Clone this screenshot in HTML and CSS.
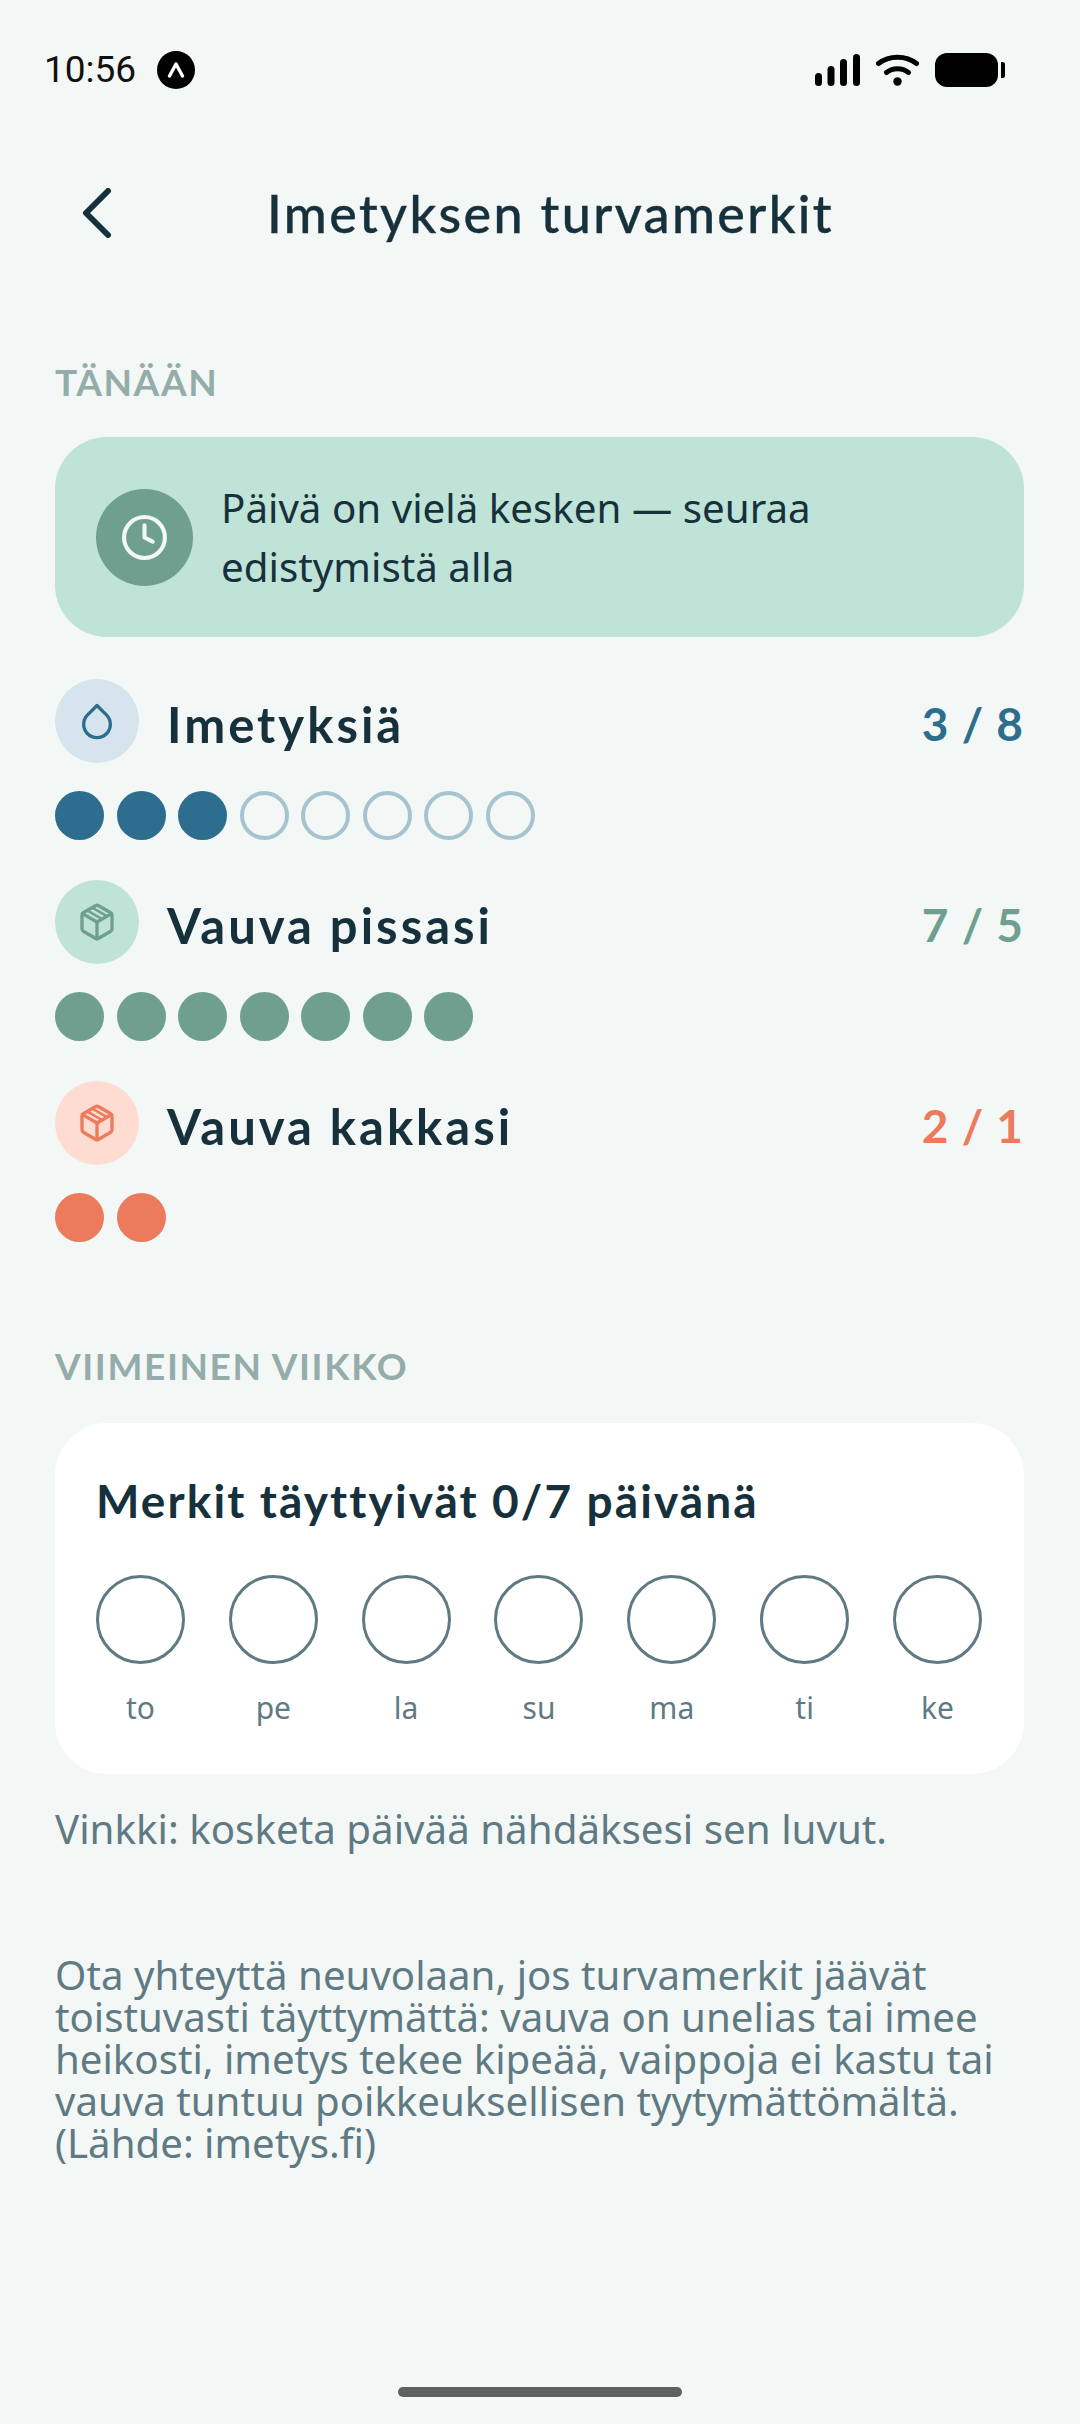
FILE: index.html
```html
<!DOCTYPE html>
<html lang="fi">
<head>
<meta charset="utf-8">
<title>Imetyksen turvamerkit</title>
<link rel="stylesheet" href="styles.css">
</head>
<body>
<div class="screen">
  <div class="status">
    <div class="status-left">
      <span class="time">10:56</span>
      <svg class="expo" viewBox="0 0 38 38"><circle cx="19" cy="19" r="19" fill="#000"/><path d="M12.5 25 19 13l6.500 12" fill="none" stroke="#fff" stroke-width="3.400" stroke-linecap="round" stroke-linejoin="round"/></svg>
    </div>
    <div class="status-right">
      <svg class="signal" viewBox="0 0 45 32"><rect x="0" y="19" width="7" height="13" rx="3.500"/><rect x="12.500" y="12" width="7" height="20" rx="3.500"/><rect x="25" y="5" width="7" height="27" rx="3.500"/><rect x="38" y="0" width="7" height="32" rx="3.500"/></svg>
      <svg class="wifi" viewBox="0 0 43 32"><path d="M2.500 9.500C13 1 30 1 40.500 9.500" fill="none" stroke="#000" stroke-width="5" stroke-linecap="round"/><path d="M10.500 18.500C17 13.500 26 13.500 32.500 18.500" fill="none" stroke="#000" stroke-width="5" stroke-linecap="round"/><circle cx="21.500" cy="27.500" r="4.200"/></svg>
      <svg class="battery" viewBox="0 0 70 34"><rect x="0" y="0" width="63" height="34" rx="12"/><path d="M66 9h1.500a2.500 2.500 0 0 1 2.500 2.500v11a2.500 2.500 0 0 1-2.500 2.500H66z"/></svg>
    </div>
  </div>

  <header class="topbar">
    <svg class="back" viewBox="0 0 30 50"><path d="M26 3 4 25l22 22" fill="none" stroke="#17313c" stroke-width="6" stroke-linecap="round" stroke-linejoin="round"/></svg>
    <h1 class="title">Imetyksen turvamerkit</h1>
  </header>

  <main class="content">
    <h2 class="section">TÄNÄÄN</h2>

    <div class="banner">
      <div class="banner-icon">
        <svg class="clock" viewBox="0 0 24 24" fill="none" stroke="currentColor" stroke-width="2" stroke-linecap="round" stroke-linejoin="round"><circle cx="12" cy="12" r="10"/><polyline points="12 6 12 12 16 14"/></svg>
      </div>
      <p class="banner-text">Päivä on vielä kesken — seuraa<br>edistymistä alla</p>
    </div>

    <section class="metric">
      <div class="metric-head">
        <span class="metric-icon bg-blue c-blue">
          <svg class="glyph" viewBox="0 0 24 24" fill="none" stroke="currentColor" stroke-width="2" stroke-linecap="round" stroke-linejoin="round"><path d="M12 2.690l5.660 5.660a8 8 0 1 1-11.310 0z"/></svg>
        </span>
        <span class="metric-name">Imetyksiä</span>
        <span class="metric-value c-blue">3 / 8</span>
      </div>
      <div class="dots">
        <i class="dot fill-blue"></i><i class="dot fill-blue"></i><i class="dot fill-blue"></i><i class="dot empty"></i><i class="dot empty"></i><i class="dot empty"></i><i class="dot empty"></i><i class="dot empty"></i>
      </div>
    </section>

    <section class="metric">
      <div class="metric-head">
        <span class="metric-icon bg-green c-green">
          <svg class="glyph" viewBox="0 0 24 24" fill="none" stroke="currentColor" stroke-width="2" stroke-linecap="round" stroke-linejoin="round"><path d="M21 16V8a2 2 0 0 0-1-1.730l-7-4a2 2 0 0 0-2 0l-7 4A2 2 0 0 0 3 8v8a2 2 0 0 0 1 1.730l7 4a2 2 0 0 0 2 0l7-4A2 2 0 0 0 21 16z"/><polyline points="3.270 6.960 12 12.010 20.730 6.960"/><line x1="12" y1="22.080" x2="12" y2="12"/><path class="band" d="M9.500 3.600l8.500 4.900M6.500 5.300l8.500 4.900"/></svg>
        </span>
        <span class="metric-name">Vauva pissasi</span>
        <span class="metric-value c-green">7 / 5</span>
      </div>
      <div class="dots">
        <i class="dot fill-green"></i><i class="dot fill-green"></i><i class="dot fill-green"></i><i class="dot fill-green"></i><i class="dot fill-green"></i><i class="dot fill-green"></i><i class="dot fill-green"></i>
      </div>
    </section>

    <section class="metric">
      <div class="metric-head">
        <span class="metric-icon bg-coral c-coral">
          <svg class="glyph" viewBox="0 0 24 24" fill="none" stroke="currentColor" stroke-width="2" stroke-linecap="round" stroke-linejoin="round"><path d="M21 16V8a2 2 0 0 0-1-1.730l-7-4a2 2 0 0 0-2 0l-7 4A2 2 0 0 0 3 8v8a2 2 0 0 0 1 1.730l7 4a2 2 0 0 0 2 0l7-4A2 2 0 0 0 21 16z"/><polyline points="3.270 6.960 12 12.010 20.730 6.960"/><line x1="12" y1="22.080" x2="12" y2="12"/><path class="band" d="M9.500 3.600l8.500 4.900M6.500 5.300l8.500 4.900"/></svg>
        </span>
        <span class="metric-name">Vauva kakkasi</span>
        <span class="metric-value c-coral">2 / 1</span>
      </div>
      <div class="dots">
        <i class="dot fill-coral"></i><i class="dot fill-coral"></i>
      </div>
    </section>

    <h2 class="section section-week">VIIMEINEN VIIKKO</h2>

    <div class="card">
      <h3 class="card-title">Merkit täyttyivät 0/7 päivänä</h3>
      <div class="week">
        <div class="day"><span class="ring"></span><span class="day-label">to</span></div>
        <div class="day"><span class="ring"></span><span class="day-label">pe</span></div>
        <div class="day"><span class="ring"></span><span class="day-label">la</span></div>
        <div class="day"><span class="ring"></span><span class="day-label">su</span></div>
        <div class="day"><span class="ring"></span><span class="day-label">ma</span></div>
        <div class="day"><span class="ring"></span><span class="day-label">ti</span></div>
        <div class="day"><span class="ring"></span><span class="day-label">ke</span></div>
      </div>
    </div>

    <p class="tip">Vinkki: kosketa päivää nähdäksesi sen luvut.</p>

    <p class="note">Ota yhteyttä neuvolaan, jos turvamerkit jäävät<br>toistuvasti täyttymättä: vauva on unelias tai imee<br>heikosti, imetys tekee kipeää, vaippoja ei kastu tai<br>vauva tuntuu poikkeuksellisen tyytymättömältä.<br>(Lähde: imetys.fi)</p>
  </main>

  <div class="home-wrap"><div class="home"></div></div>
</div>
</body>
</html>
```

FILE: styles.css
```css
* { box-sizing: border-box; }
html, body { margin: 0; padding: 0; }
body { background: #f3f7f6; color: #17313c; font-family: "Noto Sans", "Lato", sans-serif; }
.screen { width: 1080px; height: 2424px; display: flex; flex-direction: column; overflow: hidden; }

.status { height: 140px; padding: 0 75px 0 44px; display: flex; justify-content: space-between; align-items: center; flex: none; }
.status-left { display: flex; align-items: center; gap: 21px; }
.time { font-family: "Roboto", sans-serif; font-size: 37px; line-height: 42px; color: #111; }
.expo { width: 38px; height: 38px; display: block; }
.status-right { display: flex; align-items: center; gap: 16px; }
.signal { width: 45px; height: 32px; display: block; }
.wifi { width: 43px; height: 32px; display: block; }
.battery { width: 70px; height: 34px; display: block; }

.topbar { height: 146px; padding: 0 0 0 82px; display: flex; align-items: center; flex: none; position: relative; }
.back { width: 30px; height: 50px; display: block; flex: none; }
.title { margin: 0 0 0 155px; font-family: "Lato", sans-serif; font-size: 52px; font-weight: 500; line-height: 60px; letter-spacing: 2.400px; color: #17313c; -webkit-text-stroke: 0.4px #17313c; }

.content { padding: 0 56px 0 55px; flex: 1; display: flex; flex-direction: column; }
.section { margin: 74px 0 0; font-family: "Lato", sans-serif; font-size: 37px; line-height: 44px; font-weight: 700; letter-spacing: 1.600px; color: #94adaa; }
.section-week { margin-top: 102px; }

.banner { margin-top: 33px; height: 200px; background: #c0e3d7; border-radius: 52px; padding: 0 40px 0 41px; display: flex; align-items: center; gap: 28px; }
.banner-icon { width: 97px; height: 97px; border-radius: 50%; background: #6fa08f; color: #f3f7f6; display: flex; align-items: center; justify-content: center; flex: none; }
.clock { width: 49px; height: 49px; display: block; }
.banner-text { margin: 0; font-size: 40.300px; line-height: 59px; color: #17313c; }

.metric { margin-top: 40px; }
.banner + .metric { margin-top: 42px; }
.metric-head { display: flex; align-items: center; height: 84px; }
.metric-icon { width: 84px; height: 84px; border-radius: 50%; display: flex; align-items: center; justify-content: center; flex: none; }
.glyph { width: 40px; height: 40px; display: block; }
.band { stroke-width: 1.500; }
.metric-name { margin: 6px 0 0 28px; font-family: "Lato", sans-serif; font-size: 49px; font-weight: 700; color: #17313c; letter-spacing: 3px; line-height: 60px; }
.metric-value { margin: 6px 0 0 auto; font-family: "Lato", sans-serif; font-size: 46px; font-weight: 700; line-height: 60px; letter-spacing: 1px; }
.bg-blue { background: #d6e4ed; }
.bg-green { background: #c0e3d7; }
.bg-coral { background: #fedcd1; }
.c-blue { color: #2d6e8e; }
.c-green { color: #6fa08f; }
.c-coral { color: #ec7a5c; }

.dots { margin-top: 28px; display: flex; gap: 12.500px; }
.dot { width: 49px; height: 49px; border-radius: 50%; display: block; }
.fill-blue { background: #2d6e8e; }
.fill-green { background: #6fa08f; }
.fill-coral { background: #ec7a5c; }
.empty { border: 4px solid #a6c4d0; }

.card { margin-top: 35px; height: 351px; background: #fff; border-radius: 52px; padding: 50px 42px 0 41px; }
.card-title { margin: 0; font-family: "Lato", sans-serif; font-size: 46px; line-height: 56px; font-weight: 700; letter-spacing: 2.100px; color: #17313c; }
.week { margin-top: 46px; display: flex; justify-content: space-between; }
.day { width: 89px; display: flex; flex-direction: column; align-items: center; }
.ring { width: 89px; height: 89px; border-radius: 50%; border: 3.500px solid #5f7a82; display: block; }
.day-label { margin-top: 24px; font-size: 30px; line-height: 40px; color: #5f7a82; }

.tip { margin: 27px 0 0; font-size: 40.300px; line-height: 56px; color: #5f7a82; }
.note { margin: 97px 0 0; font-size: 40.200px; line-height: 42px; color: #5f7a82; }

.home-wrap { height: 64px; flex: none; display: flex; justify-content: center; }
.home { width: 284px; height: 10px; border-radius: 5px; background: #5f6160; margin-top: 27px; }
```
